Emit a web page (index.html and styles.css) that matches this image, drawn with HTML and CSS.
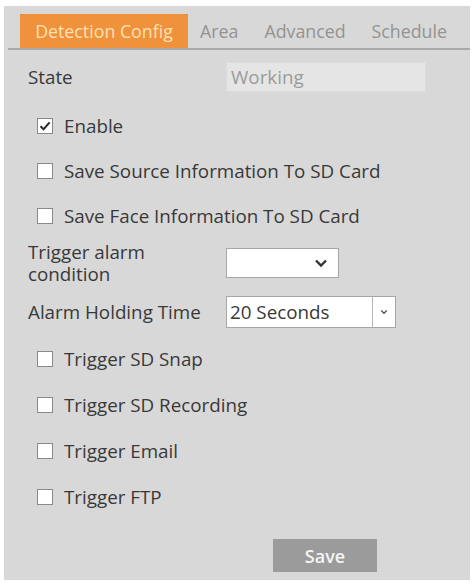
FILE: index.html
```html
<!DOCTYPE html>
<html>
<head>
<meta charset="utf-8">
<link rel="stylesheet" href="styles.css">
</head>
<body>
<div class="panel">
  <div class="tabs">
    <div class="tab active">Detection Config</div>
    <div class="tab t-area">Area</div>
    <div class="tab t-adv">Advanced</div>
    <div class="tab t-sch">Schedule</div>
  </div>

  <div class="row row-state">
    <div class="label">State</div>
    <div class="field state-field">Working</div>
  </div>

  <div class="row check-row">
    <span class="box checked"><svg viewBox="0 0 16 16" width="16" height="16"><path d="M3.5 8.2 L6.6 11.2 L12.6 4.4" fill="none" stroke="#2b2b2b" stroke-width="2"/></svg></span>
    <span class="ctext">Enable</span>
  </div>
  <div class="row check-row">
    <span class="box"></span>
    <span class="ctext">Save Source Information To SD Card</span>
  </div>
  <div class="row check-row">
    <span class="box"></span>
    <span class="ctext">Save Face Information To SD Card</span>
  </div>

  <div class="row row-trigger">
    <div class="label label-wrap">Trigger alarm<br>condition</div>
    <div class="select sel1">
      <svg class="chev" viewBox="0 0 14 10" width="14" height="10"><path d="M2 2.5 L7 7.5 L12 2.5" fill="none" stroke="#333" stroke-width="2.4"/></svg>
    </div>
  </div>

  <div class="row row-hold">
    <div class="label">Alarm Holding Time</div>
    <div class="select sel2">
      <span class="sel-text">20 Seconds</span>
      <span class="sel-btn"><svg viewBox="0 0 8 6" width="8" height="6"><path d="M1.2 1.5 L4 4.3 L6.8 1.5" fill="none" stroke="#555" stroke-width="1.4"/></svg></span>
    </div>
  </div>

  <div class="row check-row2">
    <span class="box"></span>
    <span class="ctext">Trigger SD Snap</span>
  </div>
  <div class="row check-row2">
    <span class="box"></span>
    <span class="ctext">Trigger SD Recording</span>
  </div>
  <div class="row check-row2">
    <span class="box"></span>
    <span class="ctext">Trigger Email</span>
  </div>
  <div class="row check-row2">
    <span class="box"></span>
    <span class="ctext">Trigger FTP</span>
  </div>

  <div class="actions">
    <div class="save">Save</div>
  </div>
</div>
</body>
</html>
```
FILE: styles.css
```css
html, body {
  margin: 0;
  padding: 0;
  background: #ffffff;
}
body {
  font-family: "Open Sans", "Noto Sans", sans-serif;
  color: #383838;
  font-size: 18.8px;
}
.panel {
  margin: 6px 3px 0 4px;
  height: 574px;
  background: #d8d8d8;
  box-sizing: border-box;
  padding-top: 8px;
}
.tabs {
  display: flex;
  align-items: stretch;
  height: 34px;
  margin: 0 0 0 4px;
  padding-left: 12px;
  border-bottom: 2px solid #a9a9a9;
}
.tab {
  display: flex;
  align-items: center;
  font-size: 17.8px;
  color: #939393;
}
.tab.active {
  background: #f0913b;
  color: #fde2b6;
  width: 168px;
  justify-content: center;
}
.t-area { margin-left: 12px; }
.t-adv { margin-left: 26px; }
.t-sch { margin-left: 26px; }

.row {
  display: flex;
  align-items: center;
  padding-left: 24px;
}
.label {
  width: 198px;
  flex: none;
}
.row-state { height: 52px; padding-top: 1px; }
.state-field {
  width: 200px;
  height: 30px;
  box-sizing: border-box;
  background: #e5e5e5;
  border: 1px solid #dcdcdc;
  color: #9b9b9b;
  display: flex;
  align-items: center;
  padding-left: 4px;
  margin-top: -1px;
}
.check-row { height: 45px; padding-left: 33px; }
.check-row2 { height: 46px; padding-left: 33px; }
.box {
  width: 16px;
  height: 16px;
  box-sizing: border-box;
  background: #ffffff;
  border: 1px solid #8a8a8a;
  display: inline-block;
  flex: none;
  position: relative;
}
.box svg {
  position: absolute;
  left: -1px;
  top: -1px;
}
.ctext { margin-left: 11px; }

.row-trigger { height: 50px; }
.label-wrap { line-height: 22px; }
.select {
  background: #ffffff;
  border: 1px solid #a6a6a6;
  box-sizing: border-box;
  display: flex;
  align-items: center;
}
.sel1 {
  width: 113px;
  height: 30px;
  justify-content: flex-end;
  padding-right: 10px;
}
.row-hold { height: 48px; }
.sel2 {
  width: 170px;
  height: 32px;
}
.sel-text {
  flex: 1;
  padding-left: 3px;
}
.sel-btn {
  width: 22px;
  height: 100%;
  border-left: 1px solid #b5b5b5;
  display: flex;
  align-items: center;
  justify-content: center;
}
.actions {
  display: flex;
  padding-left: 269px;
  margin-top: 19px;
}
.save {
  width: 104px;
  height: 33px;
  background: #9b9b9b;
  color: #f4f4f4;
  display: flex;
  align-items: center;
  justify-content: center;
  font-weight: 600;
  font-size: 18px;
}
```
